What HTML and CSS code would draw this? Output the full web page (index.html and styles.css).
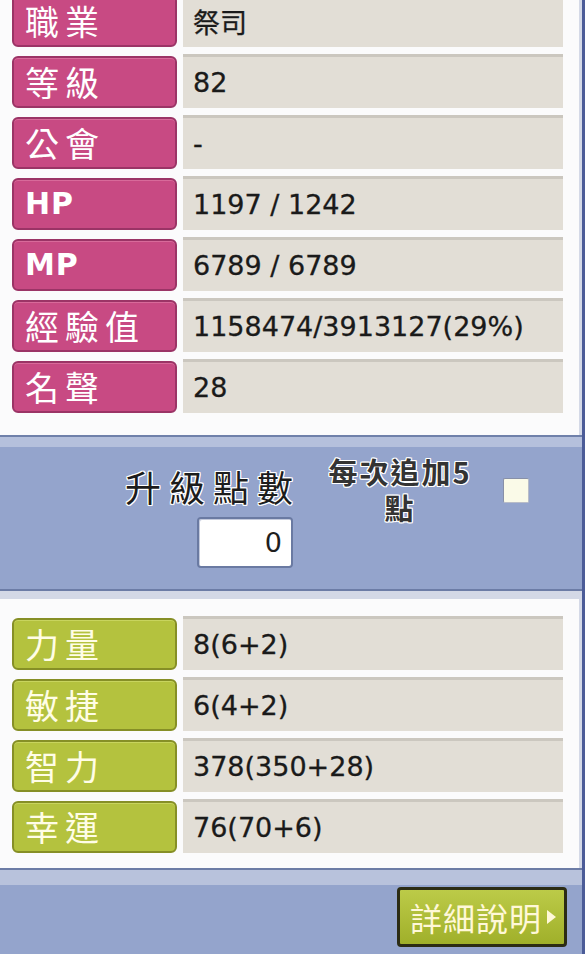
FILE: index.html
```html
<!DOCTYPE html>
<html lang="zh-Hant">
<head>
<meta charset="utf-8">
<title>角色資訊</title>
<link rel="stylesheet" href="styles.css">
</head>
<body>
<div class="frame">
  <section class="info">
    <div class="row"><div class="label pink">職業</div><div class="val">祭司</div></div>
    <div class="row"><div class="label pink">等級</div><div class="val">82</div></div>
    <div class="row"><div class="label pink">公會</div><div class="val">-</div></div>
    <div class="row"><div class="label pink latin">HP</div><div class="val">1197 / 1242</div></div>
    <div class="row"><div class="label pink latin">MP</div><div class="val">6789 / 6789</div></div>
    <div class="row"><div class="label pink">經驗值</div><div class="val">1158474/3913127(29%)</div></div>
    <div class="row"><div class="label pink">名聲</div><div class="val">28</div></div>
  </section>
  <section class="points">
    <div class="lvl">
      <div class="lvl-title">升級點數</div>
      <div class="lvl-input">0</div>
    </div>
    <div class="note">每次追加5<br>點</div>
    <div class="check"></div>
  </section>
  <section class="stats">
    <div class="row"><div class="label green">力量</div><div class="val">8(6+2)</div></div>
    <div class="row"><div class="label green">敏捷</div><div class="val">6(4+2)</div></div>
    <div class="row"><div class="label green">智力</div><div class="val">378(350+28)</div></div>
    <div class="row"><div class="label green">幸運</div><div class="val">76(70+6)</div></div>
  </section>
  <section class="footer">
    <div class="detail-btn">詳細說明<span class="arrow"></span></div>
  </section>
</div>
</body>
</html>
```
FILE: styles.css
```css
html, body {
  margin: 0;
  padding: 0;
}
body {
  width: 585px;
  height: 954px;
  overflow: hidden;
  background: #fbfbfc;
}
.frame {
  width: 585px;
  height: 954px;
  box-sizing: border-box;
  border-right: 3px solid #4c5c98;
  box-shadow: inset -3px 0 0 #d4d9e7;
  display: flex;
  flex-direction: column;
  overflow: hidden;
}
.info {
  margin-top: -7px;
  padding: 0 19px 22px 12px;
  display: flex;
  flex-direction: column;
  gap: 7px;
}
.stats {
  padding: 17px 19px 15px 12px;
  display: flex;
  flex-direction: column;
  gap: 7px;
}
.row {
  display: grid;
  grid-template-columns: 165px 1fr;
  column-gap: 6px;
  height: 54px;
}
.label {
  align-self: end;
  height: 52px;
  box-sizing: border-box;
  border: 2px solid;
  border-radius: 6px;
  display: flex;
  align-items: center;
  padding-left: 11px;
  font-family: "Noto Sans CJK TC", sans-serif;
  font-size: 34px;
  letter-spacing: 6px;
  line-height: 1;
}
.label.pink {
  background: #c84a83;
  border-color: #9b3466;
  color: #ffffff;
  box-shadow: inset 0 1px 0 #d86a9a;
}
.label.green {
  background: #b4c23e;
  border-color: #868f26;
  color: #fffde6;
  box-shadow: inset 0 1px 0 #c8d45e;
}
.label.latin {
  font-family: "DejaVu Sans", sans-serif;
  font-weight: bold;
  font-size: 30px;
  letter-spacing: 1px;
}
.val {
  background: #e2ded6;
  border-top: 3px solid #cbc7bf;
  box-sizing: border-box;
  display: flex;
  align-items: center;
  padding-left: 10px;
  font-family: "DejaVu Sans", "Noto Sans CJK TC", sans-serif;
  font-size: 27px;
  color: #1a1a1a;
  -webkit-text-stroke: 0.3px #1a1a1a;
}
.points {
  height: 164px;
  flex: none;
  box-sizing: border-box;
  padding: 12px 0 0 125px;
  display: flex;
  align-items: flex-start;
  background: linear-gradient(to bottom,
    #6f80aa 0 2px,
    #b5c0dc 2px 12px,
    #94a4cc 12px calc(100% - 10px),
    #6c7ca6 calc(100% - 10px) calc(100% - 8px),
    #d3d8e6 calc(100% - 8px));
}
.lvl {
  display: flex;
  flex-direction: column;
  align-items: flex-end;
  margin-top: 19px;
}
.lvl-title {
  font-family: "Noto Sans CJK TC", sans-serif;
  font-size: 36px;
  line-height: 40px;
  letter-spacing: 8px;
  margin-right: -8px;
  color: #1c1c1c;
  text-shadow: 1px 0 #fff, -1px 0 #fff, 0 1px #fff, 0 -1px #fff,
    1px 1px #fff, -1px -1px #fff, 1px -1px #fff, -1px 1px #fff;
}
.lvl-input {
  margin-top: 11px;
  width: 96px;
  height: 51px;
  box-sizing: border-box;
  border: 2px solid #6a7aa2;
  border-radius: 4px;
  background: #ffffff;
  box-shadow: inset 1px 1px 0 #c4cadc;
  display: flex;
  align-items: center;
  justify-content: flex-end;
  padding-right: 9px;
  font-family: "DejaVu Sans", sans-serif;
  font-size: 27px;
  color: #1e1e1e;
}
.note {
  margin: 6px 0 0 32px;
  width: 150px;
  text-align: center;
  font-family: "Noto Sans CJK TC", sans-serif;
  font-weight: bold;
  font-size: 29px;
  line-height: 36px;
  letter-spacing: 2px;
  color: #333333;
  text-shadow: 1px 0 #fff, -1px 0 #fff, 0 1px #fff, 0 -1px #fff,
    1px 1px #fff, -1px -1px #fff, 1px -1px #fff, -1px 1px #fff;
}
.check {
  margin: 31px 0 0 28px;
  width: 26px;
  height: 25px;
  box-sizing: border-box;
  background: #fafae8;
  border: 1px solid #b8bcc8;
  border-top-color: #8890a8;
  border-left-color: #8890a8;
  border-radius: 2px;
}
.footer {
  flex: 1;
  display: flex;
  align-items: flex-start;
  justify-content: flex-end;
  padding-right: 15px;
  background: linear-gradient(to bottom,
    #6c7ca6 0 2px,
    #b8c2dc 2px 17px,
    #94a4cc 17px);
}
.detail-btn {
  margin-top: 19px;
  width: 170px;
  height: 60px;
  box-sizing: border-box;
  border: 3px solid #2c2c14;
  border-radius: 4px;
  background: linear-gradient(to bottom, #bccb48, #a0b02a);
  display: flex;
  align-items: center;
  padding-left: 10px;
  font-family: "Noto Sans CJK TC", sans-serif;
  font-size: 32px;
  letter-spacing: 1px;
  color: #fff8d8;
}
.arrow {
  width: 0;
  height: 0;
  margin-left: 5px;
  border-left: 9px solid #fff8d8;
  border-top: 7px solid transparent;
  border-bottom: 7px solid transparent;
}
```
